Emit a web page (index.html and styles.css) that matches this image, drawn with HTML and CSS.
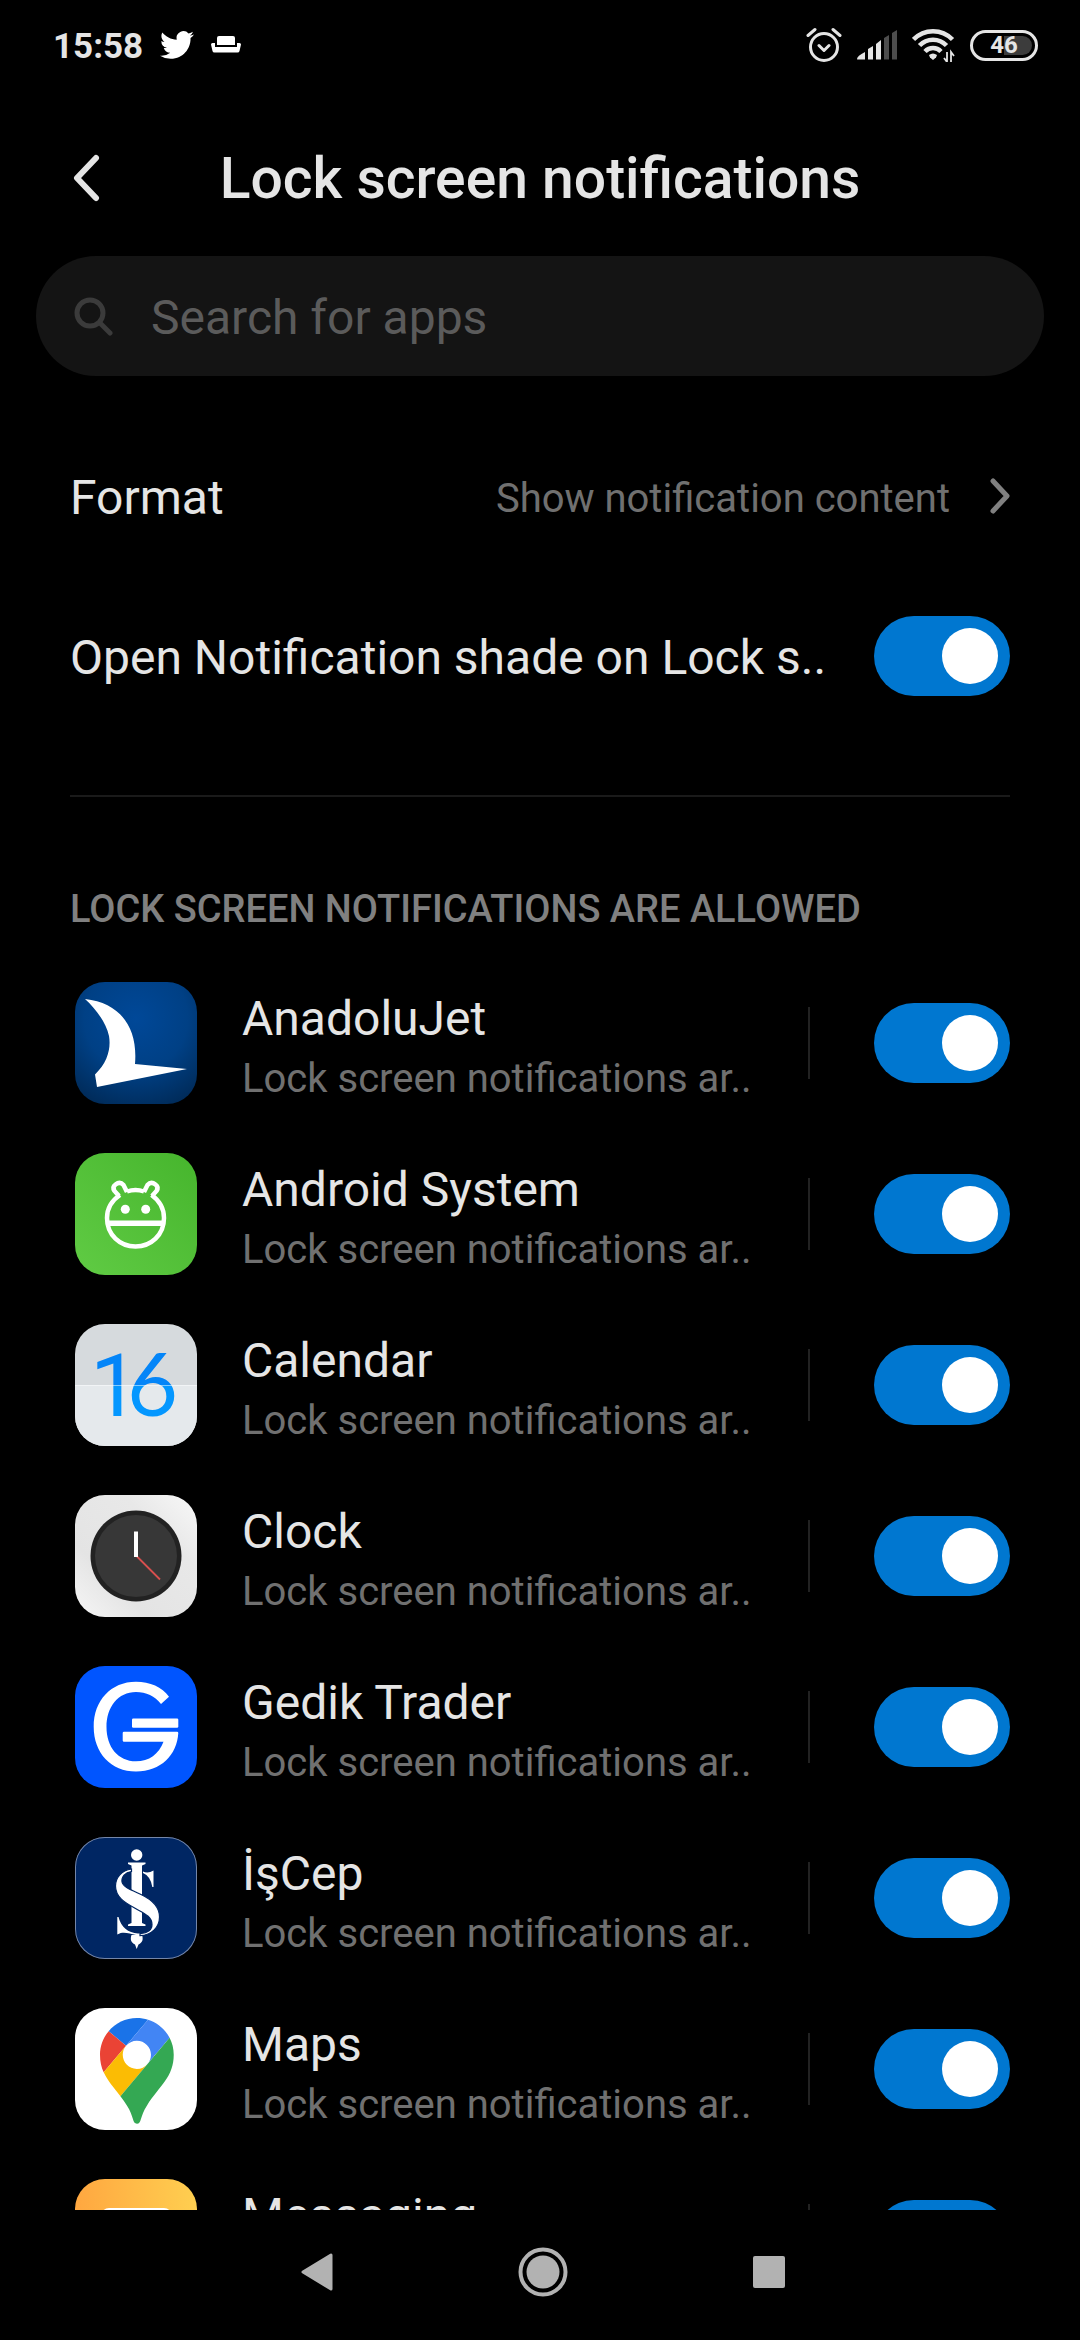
FILE: index.html
```html
<!DOCTYPE html>
<html lang="en">
<head>
    <meta charset="UTF-8">
    <meta name="viewport" content="width=device-width, initial-scale=1.0">
    <title>Lock screen notifications</title>
    <link rel="stylesheet" href="styles.css">
</head>
<body>

    <div class="status-bar">
        <span class="time">15:58</span>
        <svg class="twitter" width="34" height="34" viewBox="0 0 24 24" fill="#fff"><path d="M23.953 4.57a10 10 0 01-2.825.775 4.958 4.958 0 002.163-2.723c-.951.555-2.005.959-3.127 1.184a4.92 4.92 0 00-8.384 4.482C7.69 8.095 4.067 6.13 1.64 3.162a4.822 4.822 0 00-.666 2.475c0 1.71.87 3.213 2.188 4.096a4.904 4.904 0 01-2.228-.616v.06a4.923 4.923 0 003.946 4.827 4.996 4.996 0 01-2.212.085 4.936 4.936 0 004.604 3.417 9.867 9.867 0 01-6.102 2.105c-.39 0-.779-.023-1.17-.067a13.995 13.995 0 007.557 2.209c9.053 0 13.998-7.496 13.998-13.985 0-.21 0-.42-.015-.63A9.935 9.935 0 0024 4.59z"/></svg>
        <svg class="sofa" width="30" height="18" viewBox="0 0 30 18" fill="#fff"><path d="M8 0h14q2 0 2 2v7H6V2q0-2 2-2z"/><path d="M1.500 7H4v4h22V7h2.500Q30 7 30 8.500L28.500 15q-.3 1.500-2 1.500h-23q-1.700 0-2-1.500L0 8.500Q0 7 1.500 7z"/></svg>

        <div class="status-right">
            <svg width="36" height="36" viewBox="0 0 36 36" fill="none" stroke="#e5e5e5" stroke-width="3" stroke-linecap="round" stroke-linejoin="round"><circle cx="18" cy="20" r="13.500"/><path d="M13 18.500l5 5 5-5M2 8.500l7-6M34 8.500l-7-6"/></svg>
            <svg width="40" height="30" viewBox="0 0 40 30"><path fill="#e5e5e5" d="M0 29q0-3 8-7v7.500H1q-1 0-1-.5zM11 19l5-3v13.500h-5zM19 14l5-4v19.500h-5z"/><path fill="#4d4d4d" d="M27 8l5-3v24.500h-5zM35 3l5-3v29.500h-5z"/></svg>
            <svg width="43" height="34" viewBox="0 0 43 34"><g fill="none" stroke="#e5e5e5" stroke-width="4.500"><path d="M1.500 11.500a27 27 0 0 1 39 0"/><path d="M7.500 17.500a18.500 18.500 0 0 1 27 0"/><path d="M13 23.500a11 11 0 0 1 16 0"/></g><path fill="#e5e5e5" d="M17 27q4-3 8 0l-1 2.500-3 2.500-3-2.500z"/><path fill="none" stroke="#e5e5e5" stroke-width="1.800" d="M35 24v10l-3-4M39 34V24l3 4"/></svg>
            <div class="battery"><span>46</span></div>
        </div>
    </div>

    <header class="header">
        <button class="back" aria-label="Back">
            <svg width="28" height="50" viewBox="0 0 28 50"><path d="M24 5L5 25l19 20" fill="none" stroke="#e5e5e5" stroke-width="6" stroke-linecap="round" stroke-linejoin="round"/></svg>
        </button>
        <h1>Lock screen notifications</h1>
    </header>

    <label class="search" for="search-input">
        <svg width="40" height="40" viewBox="0 0 40 40" fill="none" stroke="#3b3b3b" stroke-width="5" stroke-linecap="round"><circle cx="16" cy="17" r="13"/><path d="M26 27l10 10"/></svg>
        <input type="text" id="search-input" placeholder="Search for apps" aria-label="Search for apps">
    </label>

    <main class="content">
        <a class="setting" href="#format">
            <span class="setting-name">Format</span>
            <span class="setting-value">Show notification content</span>
            <svg width="20" height="36" viewBox="0 0 20 36"><path d="M3 3l14 15L3 33" fill="none" stroke="#808080" stroke-width="5" stroke-linecap="round" stroke-linejoin="round"/></svg>
        </a>
        <div class="setting">
            <label class="setting-name" for="shade">Open Notification shade on Lock s..</label>
            <input type="checkbox" class="switch" id="shade" checked>
        </div>
        <hr>
        <h2>LOCK SCREEN NOTIFICATIONS ARE ALLOWED</h2>

        <ul class="apps">
            <li class="app">
                <svg class="app-icon" viewBox="0 0 122 122">
                    <defs><radialGradient id="jet" cx=".5" cy=".3" r=".85"><stop offset="0" stop-color="#004898"/><stop offset=".5" stop-color="#004085"/><stop offset="1" stop-color="#00264f"/></radialGradient></defs>
                    <rect width="122" height="122" fill="url(#jet)"/>
                    <path fill="#fff" d="M10 17C46 21 63 46 60 82l52 5-90 18-2-12.500C33 80 36 66 34 54 31 40 20 26 10 17z"/>
                </svg>
                <label class="app-text" for="app1"><span class="app-name">AnadoluJet</span><span class="app-info">Lock screen notifications ar..</span></label>
                <input type="checkbox" class="switch" id="app1" checked>
            </li>
            <li class="app">
                <svg class="app-icon" viewBox="0 0 122 122">
                    <defs><linearGradient id="robot" x1="0" y1="1" x2="1" y2="0"><stop offset="0" stop-color="#60cb44"/><stop offset="1" stop-color="#46b52d"/></linearGradient></defs>
                    <rect width="122" height="122" fill="url(#robot)"/>
                    <g fill="none" stroke="#fff" stroke-width="4.500">
                        <path d="M52 38.500Q60.500 35.500 69 38.500M45 42C36 48 32 56 32 65c0 17 13 28.500 28.500 28.500S89 82 89 65c0-9-4-17-12.500-23"/>
                        <path d="M44 43l-4.500-5q-2.500-4 1-6.500 4.500-3.500 8 .5l3.500 7M77 43l4.500-5q2.500-4-1-6.500-4.500-3.500-8 .5L69 39"/>
                        <path stroke-width="5.500" d="M33 70.300h55"/>
                    </g>
                    <circle cx="50.300" cy="56.300" r="4.500" fill="#fff"/><circle cx="70.700" cy="56.300" r="4.500" fill="#fff"/>
                </svg>
                <label class="app-text" for="app2"><span class="app-name">Android System</span><span class="app-info">Lock screen notifications ar..</span></label>
                <input type="checkbox" class="switch" id="app2" checked>
            </li>
            <li class="app">
                <svg class="app-icon" viewBox="0 0 122 122">
                    <defs><linearGradient id="day" gradientUnits="userSpaceOnUse" x1="0" y1="0" x2="0" y2="122"><stop offset=".5" stop-color="#0485f8"/><stop offset=".5" stop-color="#0497ff"/></linearGradient></defs>
                    <rect width="122" height="122" fill="#d6dadd"/><rect y="61" width="122" height="61" fill="#e5e9ec"/>
                    <text class="day" y="92" fill="url(#day)"><tspan x="15">1</tspan><tspan class="day-six" x="52">6</tspan></text>
                    <path d="M0 61.500h122" stroke="#fff" stroke-opacity=".5"/>
                </svg>
                <label class="app-text" for="app3"><span class="app-name">Calendar</span><span class="app-info">Lock screen notifications ar..</span></label>
                <input type="checkbox" class="switch" id="app3" checked>
            </li>
            <li class="app">
                <svg class="app-icon" viewBox="0 0 122 122">
                    <defs><linearGradient id="case" x1="0" y1="1" x2="1" y2="0"><stop offset="0" stop-color="#f6f6f6"/><stop offset=".3" stop-color="#e4e4e4"/><stop offset=".7" stop-color="#e8e8e8"/><stop offset="1" stop-color="#f8f8f8"/></linearGradient></defs>
                    <rect width="122" height="122" fill="url(#case)"/>
                    <circle cx="61" cy="61" r="45.500" fill="#222"/><circle cx="61" cy="61" r="41" fill="#373737"/>
                    <path d="M62 61.500l23 23" stroke="#d9504f" stroke-width="1.800"/>
                    <path d="M61 36.500V62" stroke="#fff" stroke-width="4"/>
                </svg>
                <label class="app-text" for="app4"><span class="app-name">Clock</span><span class="app-info">Lock screen notifications ar..</span></label>
                <input type="checkbox" class="switch" id="app4" checked>
            </li>
            <li class="app">
                <svg class="app-icon" viewBox="0 0 122 122">
                    <rect width="122" height="122" fill="#0055ff"/>
                    <path fill="#fff" d="M94 30.700L86 38C80 30 71 26 61 26 43 26 31.500 41 31.500 61S43 95.300 61 95.300c13 0 23-7.300 27.500-19.600H49q-1.300 0-1.300-1.300V67q0-1.300 1.300-1.300h53q1.300 0 1.300 1.300C102 89 86 105.500 61 105.500 36 105.500 18.700 87 18.700 60.700S36 15.700 61 15.700c14 0 26 5.300 33 15z"/>
                    <rect x="57" y="52.500" width="46.300" height="9.200" rx="1.300" fill="#fff"/>
                </svg>
                <label class="app-text" for="app5"><span class="app-name">Gedik Trader</span><span class="app-info">Lock screen notifications ar..</span></label>
                <input type="checkbox" class="switch" id="app5" checked>
            </li>
            <li class="app">
                <svg class="app-icon" viewBox="0 0 122 122">
                    <rect x="0" y="0" width="122" height="122" rx="30" fill="#002663" stroke="#7486a8" stroke-width="2"/>
                    <g fill="#fff">
                        <circle cx="61.700" cy="18" r="5.700"/>
                        <path d="M53 25.500h17.500v1.500l-3.500 1.500V86l3.500 1.500V89H53v-1.500l3.500-1.500V28.500L53 27z"/>
                        <path d="M68 34.500q5 2.500 10.500-1V50h-1.200Q75.500 39 68 36z"/>
                        <path d="M42.300 80h1.200C46 90 53 96 63 96.500h4V98h-6c-7-1-12-4-18.700-.5z"/>
                        <path d="M61.700 112l-1.700-4.500c-4-2-5-5-3.500-9.500H67c1.500 4.500.5 7.500-3.500 9.500z"/>
                    </g>
                    <path fill="#fff" stroke="#002663" stroke-width="1.200" d="M56.500 32C46 33.500 40.500 41 40.500 49c0 11 9 16.500 20 22.500 9 5 16.500 8 16.500 16 0 5.500-5 8.500-12 9.200v2C77 98 84.500 90 84.500 80c0-11-8-17.500-18.500-22.500C55 52.500 48 50 47 45c-.7-5 3-9.500 9.500-10.500z"/>
                </svg>
                <label class="app-text" for="app6"><span class="app-name">İşCep</span><span class="app-info">Lock screen notifications ar..</span></label>
                <input type="checkbox" class="switch" id="app6" checked>
            </li>
            <li class="app">
                <svg class="app-icon" viewBox="0 0 122 122">
                    <rect width="122" height="122" fill="#fff"/>
                    <g transform="translate(25 10) scale(.798)">
                        <path fill="#1a73e8" d="M60.200 2.200C55.800.8 51 0 46.100 0 32 0 19.300 6.400 10.800 16.500l21.800 18.300L60.200 2.200z"/>
                        <path fill="#ea4335" d="M10.800 16.500C4.100 24.500 0 34.900 0 46.100c0 8.700 1.700 15.700 4.600 22l28-33.300-21.800-18.300z"/>
                        <path fill="#4285f4" d="M46.200 28.500c9.800 0 17.700 7.900 17.700 17.700 0 4.300-1.600 8.300-4.200 11.400 0 0 13.900-16.600 27.500-32.700-5.600-10.800-15.300-19-27-22.700L32.600 34.800c3.300-3.800 8.100-6.300 13.600-6.300"/>
                        <path fill="#fbbc04" d="M46.200 63.800c-9.800 0-17.700-7.900-17.700-17.700 0-4.300 1.500-8.300 4.100-11.300l-28 33.300c4.800 10.600 12.800 19.200 21 29.900l34.100-40.500c-3.300 3.900-8.100 6.300-13.500 6.300"/>
                        <path fill="#34a853" d="M59.100 109.200c15.400-24.100 33.300-35 33.300-63 0-7.700-1.900-14.900-5.200-21.300L25.600 98c2.600 3.400 5.300 7.300 7.900 11.300 9.400 14.500 6.800 23.100 12.800 23.100s3.400-8.700 12.800-23.200"/>
                    </g>
                </svg>
                <label class="app-text" for="app7"><span class="app-name">Maps</span><span class="app-info">Lock screen notifications ar..</span></label>
                <input type="checkbox" class="switch" id="app7" checked>
            </li>
            <li class="app">
                <svg class="app-icon" viewBox="0 0 122 122">
                    <defs><linearGradient id="sms" x1="0" y1="0" x2="1" y2="0"><stop offset="0" stop-color="#ffa740"/><stop offset="1" stop-color="#ffcf50"/></linearGradient></defs>
                    <rect width="122" height="122" fill="url(#sms)"/>
                    <rect x="26" y="29" width="71" height="58" rx="8" fill="#fff"/>
                </svg>
                <label class="app-text" for="app8"><span class="app-name">Messaging</span><span class="app-info">Lock screen notifications ar..</span></label>
                <input type="checkbox" class="switch" id="app8" checked>
            </li>
        </ul>
    </main>

    <nav class="nav-bar">
        <button aria-label="Back"><svg width="32" height="38" viewBox="0 0 32 38"><path d="M2 19L30 2v34z" fill="#b2b2b2" stroke="#b2b2b2" stroke-width="3" stroke-linejoin="round"/></svg></button>
        <button aria-label="Home"><svg width="50" height="50" viewBox="0 0 50 50"><circle cx="25" cy="25" r="22.500" fill="none" stroke="#b2b2b2" stroke-width="4"/><circle cx="25" cy="25" r="16.500" fill="#b2b2b2"/></svg></button>
        <button aria-label="Recent apps"><svg width="32" height="32" viewBox="0 0 32 32"><rect width="32" height="32" rx="2" fill="#b2b2b2"/></svg></button>
    </nav>

</body>
</html>
```
FILE: styles.css
```css
* {
    box-sizing: border-box;
}
body {
    margin: 0;
    height: 100vh;
    display: flex;
    flex-direction: column;
    overflow: hidden;
    background-color: #000;
    color: #e5e5e5;
    font-family: Roboto, sans-serif;
    font-size: 48px;
}
svg {
    display: block;
    flex: none;
}
button {
    padding: 0;
    border: none;
    background: none;
    cursor: pointer;
}

/* Status bar */
.status-bar {
    display: flex;
    align-items: center;
    flex: none;
    height: 90px;
    padding: 0 42px 0 53px;
}
.time {
    padding-top: 2px;
    font-size: 35px;
    font-weight: 700;
}
.twitter {
    margin-left: 17px;
}
.sofa {
    margin-left: 17px;
}
.status-right {
    display: flex;
    align-items: center;
    gap: 15px;
    margin-left: auto;
}
.battery {
    display: flex;
    align-items: center;
    justify-content: center;
    width: 68px;
    height: 31px;
    padding: 3px;
    border: 3px solid #e5e5e5;
    border-radius: 16px;
    background: linear-gradient(to right, #000 50%, #3c3c3c 50%) content-box;
    font-size: 24px;
    font-weight: 700;
}

/* Title and search */
.header {
    display: grid;
    grid-template-columns: 100px 1fr 100px;
    align-items: center;
    flex: none;
    height: 166px;
    padding: 10px 36px 0;
}
.back {
    justify-self: center;
}
h1 {
    margin: 0;
    text-align: center;
    font-size: 57px;
    font-weight: 500;
}
.search {
    display: flex;
    align-items: center;
    flex: none;
    gap: 37px;
    height: 120px;
    margin: 0 36px 40px;
    padding: 0 38px;
    border-radius: 60px;
    background-color: #141414;
}
.search input {
    flex: 1;
    min-width: 0;
    padding: 2px 0 0;
    border: none;
    outline: none;
    background: none;
    color: #e5e5e5;
    font: inherit;
}
.search input::placeholder {
    color: #5b5b5b;
}

/* Settings */
.content {
    flex: 1;
    min-height: 0;
    padding: 0 70px;
    overflow: hidden;
}
.setting {
    display: flex;
    align-items: center;
    height: 160px;
    color: inherit;
    text-decoration: none;
}
.setting-name {
    flex: 1;
    padding-top: 2px;
    white-space: nowrap;
}
.setting-value {
    margin-right: 40px;
    padding-top: 4px;
    color: #707070;
    font-size: 40px;
}
.switch {
    appearance: none;
    flex: none;
    width: 136px;
    height: 80px;
    margin: 0;
    padding: 12px;
    border-radius: 40px;
    background-color: #333;
    cursor: pointer;
}
.switch::before {
    content: "";
    display: block;
    width: 56px;
    height: 56px;
    border-radius: 50%;
    background-color: #fff;
}
.switch:checked {
    background-color: #0077d0;
}
.switch:checked::before {
    margin-left: auto;
}
hr {
    height: 2px;
    margin: 59px 0 0;
    border: none;
    background-color: #1a1a1a;
}
h2 {
    margin: 0;
    padding: 84px 0 21px;
    color: #808080;
    font-size: 38px;
    font-weight: 500;
    line-height: 56px;
}

/* App list */
.apps {
    margin: 0;
    padding: 0;
    list-style: none;
}
.app {
    display: flex;
    align-items: center;
    padding: 24px 0 25px 5px;
}
.app-icon {
    width: 122px;
    height: 122px;
    border-radius: 30px;
}
.day {
    font-size: 88px;
}
.day-six {
    font-family: Lato, sans-serif;
}
.app-text {
    display: flex;
    flex: 1;
    flex-direction: column;
    gap: 4px;
    margin-left: 45px;
    padding-top: 4px;
    background: linear-gradient(#222, #222) right center / 2px 72px no-repeat;
    white-space: nowrap;
}
.app-name {
    line-height: 64px;
}
.app-info {
    color: #707070;
    font-size: 40px;
    line-height: 48px;
}
.app .switch {
    margin-left: 64px;
}

/* Navigation buttons */
.nav-bar {
    display: flex;
    justify-content: center;
    flex: none;
    height: 130px;
    padding: 0 0 6px 6px;
}
.nav-bar button {
    display: flex;
    align-items: center;
    justify-content: center;
    width: 21%;
}
```
